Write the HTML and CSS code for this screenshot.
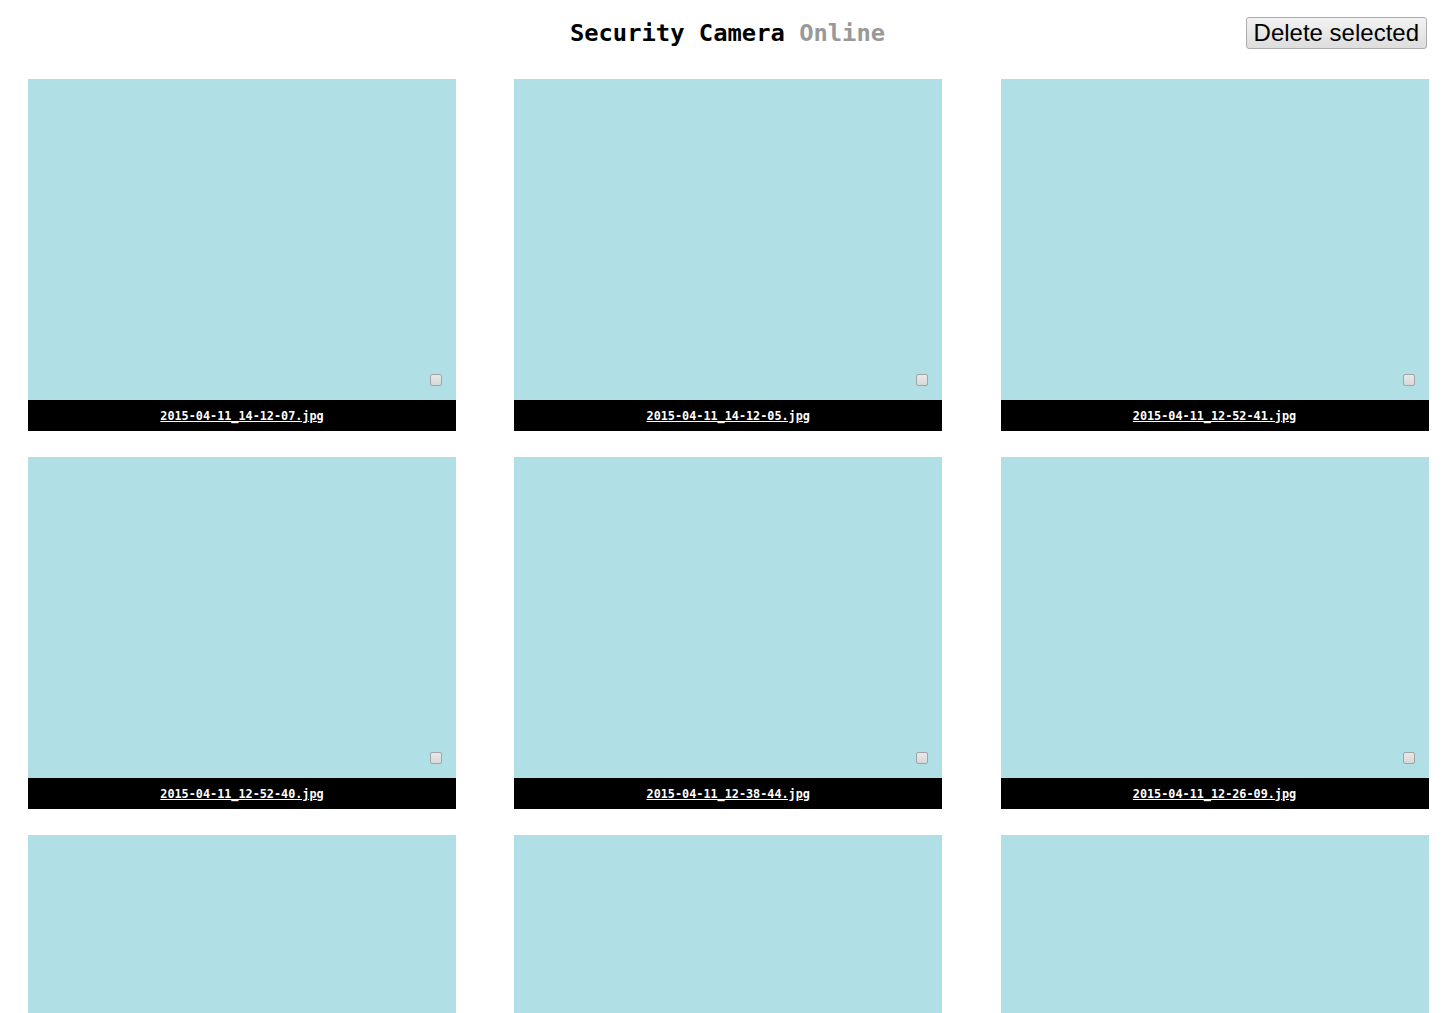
FILE: index.html
```html
<!DOCTYPE html>
<html>
<head>
<meta charset="utf-8">
<title>Security Camera</title>
<link rel="stylesheet" href="styles.css">
</head>
<body>
<header class="header">
  <div class="spacer"></div>
  <h1 class="title">Security Camera <span class="status">Online</span></h1>
  <div class="actions"><button class="btn">Delete selected</button></div>
</header>
<main class="grid">
  <figure class="card"><div class="shot"><input type="checkbox" class="pick"></div><figcaption class="cap"><a href="#">2015-04-11_14-12-07.jpg</a></figcaption></figure>
  <figure class="card"><div class="shot"><input type="checkbox" class="pick"></div><figcaption class="cap"><a href="#">2015-04-11_14-12-05.jpg</a></figcaption></figure>
  <figure class="card"><div class="shot"><input type="checkbox" class="pick"></div><figcaption class="cap"><a href="#">2015-04-11_12-52-41.jpg</a></figcaption></figure>
  <figure class="card"><div class="shot"><input type="checkbox" class="pick"></div><figcaption class="cap"><a href="#">2015-04-11_12-52-40.jpg</a></figcaption></figure>
  <figure class="card"><div class="shot"><input type="checkbox" class="pick"></div><figcaption class="cap"><a href="#">2015-04-11_12-38-44.jpg</a></figcaption></figure>
  <figure class="card"><div class="shot"><input type="checkbox" class="pick"></div><figcaption class="cap"><a href="#">2015-04-11_12-26-09.jpg</a></figcaption></figure>
  <figure class="card"><div class="shot"><input type="checkbox" class="pick"></div><figcaption class="cap"><a href="#">2015-04-11_12-20-15.jpg</a></figcaption></figure>
  <figure class="card"><div class="shot"><input type="checkbox" class="pick"></div><figcaption class="cap"><a href="#">2015-04-11_12-18-02.jpg</a></figcaption></figure>
  <figure class="card"><div class="shot"><input type="checkbox" class="pick"></div><figcaption class="cap"><a href="#">2015-04-11_12-10-33.jpg</a></figcaption></figure>
</main>
</body>
</html>
```
FILE: styles.css
```css
html, body {
  margin: 0;
  padding: 0;
  background: #ffffff;
}

body {
  font-family: "DejaVu Sans Mono", "Liberation Mono", monospace;
}

.header {
  display: grid;
  grid-template-columns: 1fr auto 1fr;
  align-items: center;
  padding: 17px 28px 0 28px;
  height: 32px;
  margin-bottom: 30px;
}

.title {
  margin: 0;
  font-size: 23.8px;
  font-weight: bold;
  color: #000;
  line-height: 32px;
  white-space: nowrap;
}

.status {
  color: #999999;
}

.actions {
  display: flex;
  justify-content: flex-end;
}

.btn {
  font-family: "Liberation Sans", Arial, sans-serif;
  font-size: 24px;
  height: 32px;
  padding: 0 7px;
  line-height: 28px;
  white-space: nowrap;
  color: #000;
  background: linear-gradient(#f2f2f2, #dddddd);
  border: 1px solid #acacac;
  border-radius: 3px;
}

.grid {
  display: grid;
  grid-template-columns: repeat(3, 428px);
  justify-content: space-between;
  row-gap: 26px;
  padding: 0 26.5px 0 28px;
}

.card {
  margin: 0;
  display: flex;
  flex-direction: column;
}

.shot {
  position: relative;
  height: 321px;
  background: #b0e0e6;
}

.pick {
  position: absolute;
  right: 14px;
  bottom: 14px;
  margin: 0;
  width: 12px;
  height: 12px;
  appearance: none;
  -webkit-appearance: none;
  background: linear-gradient(#e8e8e8, #d8d8d8);
  border: 1px solid #a3a3a3;
  border-radius: 2px;
  box-sizing: border-box;
}

.cap {
  height: 31px;
  background: #000;
  display: flex;
  align-items: center;
  justify-content: center;
}

.cap a {
  color: #ffffff;
  font-size: 11.8px;
  font-weight: bold;
  text-decoration: underline;
}
```
